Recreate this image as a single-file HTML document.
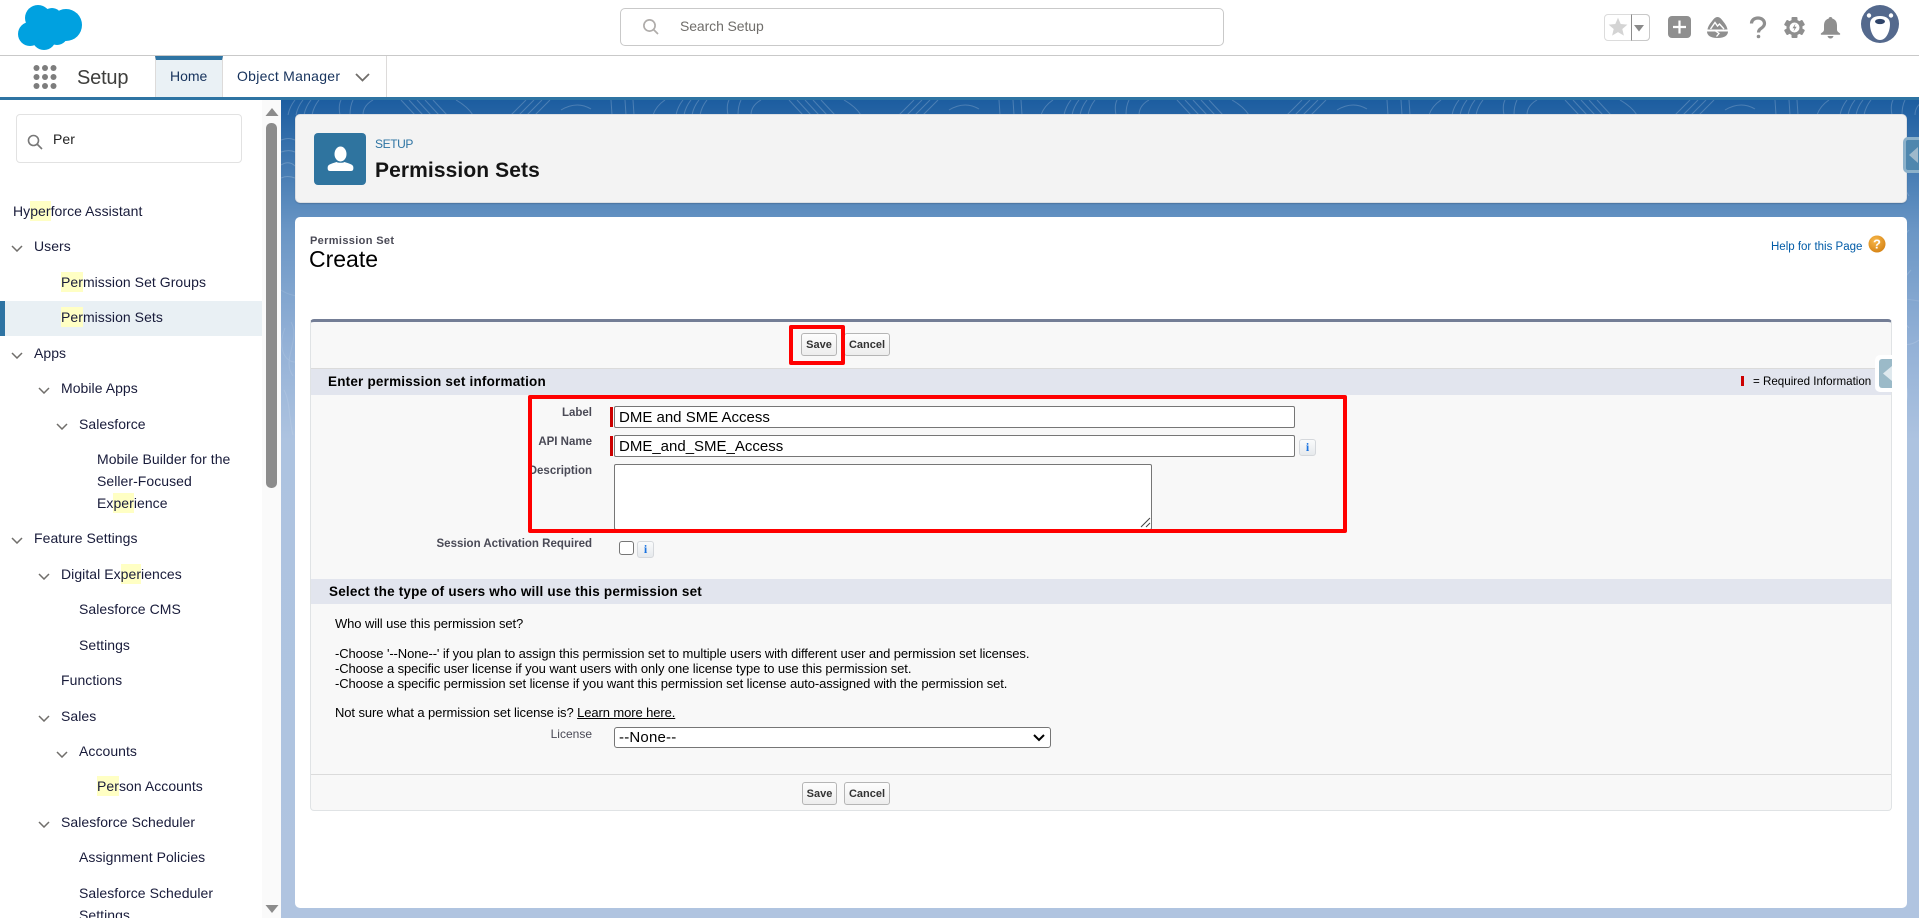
<!DOCTYPE html>
<html lang="en">
<head>
<meta charset="utf-8">
<title>Permission Sets</title>
<style>
html,body{margin:0;padding:0;width:1919px;height:918px;overflow:hidden;background:#fff}
body{position:relative;font-family:"Liberation Sans",Arial,sans-serif;color:#16325c}
div,span,svg{box-sizing:border-box}
.a{position:absolute}
.t{position:absolute;white-space:nowrap}
.r{position:absolute;white-space:nowrap;height:20px;line-height:20px;font-size:14px;letter-spacing:.05px;color:#181b3a;margin-top:-1px}
.h{display:inline-block;background:#ffffc4;height:20px;line-height:20px}
.c{position:absolute;width:12px;height:7px}
.lb{position:absolute;right:1327px;white-space:nowrap;font-size:11.5px;font-weight:bold;color:#4a4a56;height:14px;line-height:14px}
.tx{position:absolute;white-space:nowrap;font-size:13px;color:#000;height:15px;line-height:15px;letter-spacing:-.1px}
.sec{position:absolute;left:311px;width:1580px;background:#e2e5ee}
.sect{position:absolute;white-space:nowrap;font-size:13.5px;font-weight:bold;color:#000;line-height:16px;height:16px;letter-spacing:.2px}
.btn{position:absolute;border:1px solid #b5b5b5;border-radius:3px;background:linear-gradient(#fdfdfd,#ededed);font-size:11px;font-weight:bold;color:#333;text-align:center;line-height:22px;height:23px}
.inp{position:absolute;background:#fff;border:1px solid #767676;border-radius:2px;font-size:15px;color:#000;line-height:22px;padding-left:4px;white-space:nowrap}
.req{position:absolute;background:#c00;width:3px}
.info{position:absolute;border:1px solid #d5d8dc;border-radius:3px;background:linear-gradient(#fafbfc,#e6e9ec);color:#1a73e0;font:bold 12px "Liberation Serif",serif;text-align:center;line-height:15px}
.red{position:absolute;border:4px solid #f00;border-radius:2px;pointer-events:none}
</style>
</head>
<body>

<!-- content background -->
<div class="a" style="left:281px;top:100px;width:1638px;height:818px;background:linear-gradient(#1c5da0 0,#3f77b0 60px,#6a96c5 130px,#92b0d6 240px,#adc3e0 340px,#b0c4e0 818px)"></div>
<svg class="a" style="left:281px;top:100px" width="1638" height="340" fill="none" stroke="#fff" stroke-width="1">
  <defs>
    <pattern id="p" width="388" height="340" patternUnits="userSpaceOnUse">
      <g stroke-opacity=".2">
      <path d="M14 0C10 5 8 10 7 15M22 0C18 5 16 10 15 15M30 0C26 5 24 10 23 15M38 0C34 5 32 10 31 15M60 0C58 4 58 10 59 15M72 0C70 4 69 10 69 15M92 0C85 4 82 9 82 15M120 0L134 15M128 0L142 15M136 0L150 15M144 0L158 15M152 0L166 15M175 0C182 4 188 9 192 15M230 15L245 0M238 15L253 0M246 15L261 0M254 15L269 0M280 10C290 4 300 3 310 9M330 0L331 15M344 0L345 15M352 0L353 15M372 15C374 9 378 4 384 0"/>
      <path d="M0 40C6 38 9 38 14 40M0 52C6 50 10 50 14 52M0 65C5 62 10 62 14 66M0 78C4 76 9 76 14 78"/>
      </g>
      <g stroke-opacity=".1">
      <path d="M0 190C8 196 30 200 46 198C70 196 90 204 120 204M30 204C34 210 50 214 70 212M300 204C320 214 345 214 388 206M200 204C215 216 240 216 262 206"/>
      <path d="M4 228C-4 248 4 262 14 262M10 222C20 240 0 260 12 276M3 290C9 300 8 320 12 335"/>
      </g>
    </pattern>
  </defs>
  <rect width="1638" height="340" fill="url(#p)" stroke="none"/>
  <path stroke-opacity=".15" d="M1628 130C1610 150 1605 170 1618 190M1630 170C1612 190 1612 210 1628 228M1612 240C1622 246 1630 246 1638 240M1612 270C1624 276 1630 290 1624 306M1626 60C1620 70 1620 84 1628 96" />
</svg>

<!-- top bar -->
<div class="a" style="left:0;top:0;width:1919px;height:56px;background:#fff;border-bottom:1px solid #c9c9c9"></div>
<svg class="a" style="left:16px;top:3px" width="68" height="49" fill="#00a1e0">
  <circle cx="22" cy="15" r="13"/><circle cx="36" cy="15" r="10"/><circle cx="50" cy="22" r="16"/>
  <circle cx="14" cy="31" r="12"/><circle cx="28" cy="35" r="12"/><circle cx="41" cy="31" r="11"/><circle cx="28" cy="24" r="14"/>
</svg>
<div class="a" style="left:620px;top:8px;width:604px;height:38px;border:1px solid #c9c9c9;border-radius:5px;background:#fff"></div>
<svg class="a" style="left:642px;top:18px" width="17" height="17" fill="none" stroke="#b0adab" stroke-width="1.7"><circle cx="7.5" cy="7.5" r="5.6"/><path d="M11.5 11.5L16 16"/></svg>
<div class="t" style="left:680px;top:16px;height:20px;line-height:20px;font-size:14px;color:#706e6b;letter-spacing:-.1px">Search Setup</div>

<!-- top right icons -->
<div class="a" style="left:1604px;top:14px;width:46px;height:27px;border:1px solid #dcdcdc;border-radius:4px;background:#fff"></div>
<div class="a" style="left:1631px;top:14px;width:19px;height:27px;border:1px solid #c9c9c9;border-left:1px solid #8c8c8c;border-radius:0 4px 4px 0"></div>
<svg class="a" style="left:1608px;top:17px" width="20" height="20" fill="#d4d4d4"><path d="M10 .8l2.7 6.2 6.7.6-5.1 4.4 1.6 6.6-5.9-3.5-5.9 3.5 1.6-6.6L.6 7.6l6.7-.6z"/></svg>
<svg class="a" style="left:1633px;top:25px" width="12" height="7" fill="#8a8a8a"><path d="M1 0h10L6 6.5z"/></svg>
<div class="a" style="left:1668px;top:16px;width:23px;height:22px;background:#8f8f8f;border-radius:4px"></div>
<svg class="a" style="left:1668px;top:16px" width="23" height="22" stroke="#fff" stroke-width="2.2"><path d="M11.5 4.500v13M5 11h13"/></svg>
<svg class="a" style="left:1706px;top:17px" width="23" height="21" fill="#8f8f8f">
  <path d="M11.5 0C13.500 0 15 1.500 16.500 3.500C18.500 6 21 9 21.500 12.500H1.500C2 9 4.500 6 6.500 3.500C8 1.500 9.500 0 11.500 0z"/>
  <path d="M1 14.500h21C22 18 19 21 11.500 21S1 18 1 14.500z"/>
  <path d="M4.500 12L9 5.500l2.500 3.500 2-2L18 12" fill="none" stroke="#fff" stroke-width="1.400"/>
  <path d="M9.500 14l3.500 2.500-2.500 3" fill="none" stroke="#fff" stroke-width="1.300"/>
</svg>
<svg class="a" style="left:1748px;top:16px" width="20" height="23" fill="none" stroke="#8f8f8f" stroke-width="3.2"><path d="M3.500 7.500C3.500 4 6.500 2 10 2s6.500 2.200 6.500 5.500c0 2.300-1.400 3.400-3 4.600-1.900 1.300-3 2.200-3 4.400"/><circle cx="10.500" cy="20.500" r="1.300" fill="#8f8f8f" stroke-width="1"/></svg>
<svg class="a" style="left:1784px;top:17px" width="21" height="21">
  <g fill="#8f8f8f">
    <rect x="7.500" y="0" width="6" height="21" rx="1"/>
    <rect x="7.500" y="0" width="6" height="21" rx="1" transform="rotate(60 10.500 10.500)"/>
    <rect x="7.500" y="0" width="6" height="21" rx="1" transform="rotate(120 10.500 10.500)"/>
    <circle cx="10.500" cy="10.500" r="8"/>
  </g>
  <circle cx="10.500" cy="10.500" r="5" fill="#fff"/>
  <path fill="#8f8f8f" d="M11.500 6.500l-3 4.700h2l-1 3.300 3.200-4.800h-2.100z"/>
</svg>
<svg class="a" style="left:1819px;top:16px" width="23" height="23" fill="#8f8f8f"><path d="M11.500 1c1 0 1.700.6 1.900 1.600C16.600 3.500 18 6 18 9.500v4c0 1.800 1.100 2.600 2.800 3.700.8.500.5 1.500-.4 1.500H2.600c-.9 0-1.200-1-.4-1.500C3.900 16.100 5 15.300 5 13.500v-4c0-3.500 1.400-6 4.600-6.900C9.800 1.600 10.500 1 11.500 1z"/><path d="M8.500 20h6c-.3 1.500-1.600 2.500-3 2.500s-2.700-1-3-2.500z"/></svg>
<svg class="a" style="left:1861px;top:5px" width="38" height="38">
  <circle cx="19" cy="19" r="19" fill="#54698d"/>
  <circle cx="8" cy="10.500" r="2.200" fill="#fff"/><circle cx="30" cy="10.500" r="2.200" fill="#fff"/>
  <path fill="#fff" d="M19 11c6 0 10 2.500 10 8 0 7-3.500 16-10 16S9 26 9 19c0-5.500 4-8 10-8z"/>
  <ellipse cx="19" cy="16.500" rx="5" ry="2.600" fill="#2f4469"/>
</svg>

<!-- nav bar -->
<div class="a" style="left:0;top:97px;width:1919px;height:3px;background:#2e74a3"></div>
<svg class="a" style="left:33px;top:65px" width="24" height="24" fill="#7d7d7d">
  <circle cx="3.500" cy="3" r="3"/><circle cx="12" cy="3" r="3"/><circle cx="20.500" cy="3" r="3"/>
  <circle cx="3.500" cy="12" r="3"/><circle cx="12" cy="12" r="3"/><circle cx="20.500" cy="12" r="3"/>
  <circle cx="3.500" cy="21" r="3"/><circle cx="12" cy="21" r="3"/><circle cx="20.500" cy="21" r="3"/>
</svg>
<div class="t" style="left:77px;top:65px;height:26px;line-height:26px;font-size:20px;color:#3e3e3c;letter-spacing:-.2px">Setup</div>
<div class="a" style="left:155px;top:56px;width:68px;height:41px;background:#eaf1f5;border-top:4px solid #2e74a3;border-right:1px solid #dddbda;border-left:1px solid #dddbda"></div>
<div class="t" style="left:170px;top:66px;height:20px;line-height:20px;font-size:14px;color:#16325c">Home</div>
<div class="t" style="left:237px;top:66px;height:20px;line-height:20px;font-size:14px;color:#16325c;letter-spacing:.26px">Object Manager</div>
<svg class="a" style="left:355px;top:73px" width="15" height="9" fill="none" stroke="#706e6b" stroke-width="1.800"><path d="M1 1l6.500 6.500L14 1"/></svg>
<div class="a" style="left:386px;top:56px;width:1px;height:41px;background:#dddbda"></div>

<!-- sidebar -->
<div class="a" style="left:0;top:100px;width:281px;height:818px;background:#fafafa"></div>
<div class="a" style="left:0;top:100px;width:262px;height:818px;background:#fff"></div>
<div class="a" style="left:16px;top:114px;width:226px;height:49px;border:1px solid #e2e2e2;border-radius:4px;background:#fff"></div>
<svg class="a" style="left:27px;top:134px" width="16" height="16" fill="none" stroke="#777" stroke-width="1.600"><circle cx="6.500" cy="6.500" r="5"/><path d="M10 10l5 5"/></svg>
<div class="r" style="left:53px;top:130px;color:#222">Per</div>
<div class="a" style="left:0;top:301px;width:262px;height:35px;background:#e9f0f4;border-left:5px solid #2e74a3"></div>

<div class="r" style="left:13px;top:202px">Hy<span class="h">per</span>force Assistant</div>
<div class="r" style="left:34px;top:237px">Users</div>
<div class="r" style="left:61px;top:273px"><span class="h">Per</span>mission Set Groups</div>
<div class="r" style="left:61px;top:308px"><span class="h">Per</span>mission Sets</div>
<div class="r" style="left:34px;top:344px">Apps</div>
<div class="r" style="left:61px;top:379px">Mobile Apps</div>
<div class="r" style="left:79px;top:415px">Salesforce</div>
<div class="r" style="left:97px;top:450px">Mobile Builder for the</div>
<div class="r" style="left:97px;top:472px">Seller-Focused</div>
<div class="r" style="left:97px;top:494px">Ex<span class="h">per</span>ience</div>
<div class="r" style="left:34px;top:529px">Feature Settings</div>
<div class="r" style="left:61px;top:565px">Digital Ex<span class="h">per</span>iences</div>
<div class="r" style="left:79px;top:600px">Salesforce CMS</div>
<div class="r" style="left:79px;top:636px">Settings</div>
<div class="r" style="left:61px;top:671px">Functions</div>
<div class="r" style="left:61px;top:707px">Sales</div>
<div class="r" style="left:79px;top:742px">Accounts</div>
<div class="r" style="left:97px;top:777px"><span class="h">Per</span>son Accounts</div>
<div class="r" style="left:61px;top:813px">Salesforce Scheduler</div>
<div class="r" style="left:79px;top:848px">Assignment Policies</div>
<div class="r" style="left:79px;top:884px">Salesforce Scheduler</div>
<div class="r" style="left:79px;top:906px;height:13px;overflow:hidden">Settings</div>

<svg width="0" height="0" style="position:absolute"><defs><path id="ch" d="M1 1l5 5 5-5" fill="none" stroke="#706e6b" stroke-width="1.500"/></defs></svg>
<svg class="c" style="left:11px;top:245px"><use href="#ch"/></svg>
<svg class="c" style="left:11px;top:352px"><use href="#ch"/></svg>
<svg class="c" style="left:38px;top:387px"><use href="#ch"/></svg>
<svg class="c" style="left:56px;top:423px"><use href="#ch"/></svg>
<svg class="c" style="left:11px;top:537px"><use href="#ch"/></svg>
<svg class="c" style="left:38px;top:573px"><use href="#ch"/></svg>
<svg class="c" style="left:38px;top:715px"><use href="#ch"/></svg>
<svg class="c" style="left:56px;top:751px"><use href="#ch"/></svg>
<svg class="c" style="left:38px;top:821px"><use href="#ch"/></svg>

<svg class="a" style="left:265px;top:108px" width="14" height="8" fill="#8c8c8c"><path d="M7 0l6.500 8H.5z"/></svg>
<div class="a" style="left:266px;top:123px;width:11px;height:365px;background:#8c8c8c;border-radius:5px"></div>
<svg class="a" style="left:265px;top:905px" width="14" height="8" fill="#8c8c8c"><path d="M7 8L.5 0h13z"/></svg>

<!-- page header card -->
<div class="a" style="left:295px;top:114px;width:1612px;height:89px;background:#f3f3f3;border-radius:5px;border:1px solid #dcdfe3;box-shadow:0 1px 1px rgba(0,0,0,.15)"></div>
<div class="a" style="left:314px;top:133px;width:52px;height:52px;background:#2f749f;border-radius:4px"></div>
<svg class="a" style="left:327px;top:146px" width="27" height="26" fill="#fff">
  <ellipse cx="13.500" cy="8" rx="6" ry="7.500"/>
  <path d="M1 24c-.5-1-.5-3 0-4 1-2 6-3 8.500-4 1.500 1 6.500 1 8 0 2.500 1 7.500 2 8.500 4 .5 1 .5 3 0 4-.3.500-1 1-2 1H3c-1 0-1.700-.5-2-1z"/>
</svg>
<div class="t" style="left:375px;top:135px;height:18px;line-height:18px;font-size:12px;letter-spacing:-.4px;color:#2e74a3">SETUP</div>
<div class="t" style="left:375px;top:158px;height:26px;line-height:26px;font-size:21px;font-weight:bold;color:#141414;letter-spacing:.1px">Permission Sets</div>
<div class="a" style="left:1903px;top:137px;width:16px;height:36px;border:3px solid rgba(255,255,255,.35);border-right:0;border-radius:5px 0 0 5px;background:#4f87ae"></div>
<svg class="a" style="left:1909px;top:147px" width="10" height="16" fill="#9fb9cb"><path d="M9 0v16L0 8z"/></svg>

<!-- main card -->
<div class="a" style="left:295px;top:217px;width:1612px;height:691px;background:#fff;border-radius:5px"></div>
<div class="t" style="left:310px;top:234px;height:14px;line-height:14px;font-size:11px;font-weight:bold;color:#4a4a56;letter-spacing:.35px">Permission Set</div>
<div class="t" style="left:309px;top:245px;height:28px;line-height:28px;font-size:23px;color:#000">Create</div>
<div class="t" style="left:1771px;top:240px;height:15px;line-height:15px;font-size:11.5px;color:#015ba7">Help for this Page</div>
<svg class="a" style="left:1868px;top:235px" width="18" height="18"><defs><radialGradient id="og" cx=".4" cy=".3" r=".8"><stop offset="0" stop-color="#f8b84a"/><stop offset="1" stop-color="#d27e10"/></radialGradient></defs><circle cx="9" cy="9" r="8.500" fill="url(#og)"/><text x="9" y="13.500" text-anchor="middle" font-family="Liberation Sans" font-size="13" font-weight="bold" fill="#fff">?</text></svg>

<!-- form block -->
<div class="a" style="left:310px;top:319px;width:1582px;height:492px;background:#f8f8f8;border:1px solid #e0e3e5;border-top:3px solid #747e96;border-radius:4px"></div>
<div class="btn" style="left:801px;top:333px;width:36px">Save</div>
<div class="btn" style="left:844px;top:333px;width:46px">Cancel</div>
<div class="a" style="left:311px;top:368px;width:1580px;height:1px;background:#dbdbdb"></div>
<div class="sec" style="top:369px;height:26px"></div>
<div class="sect" style="left:328px;top:374px">Enter permission set information</div>
<div class="req" style="left:1741px;top:376px;height:10px"></div>
<div class="t" style="left:1753px;top:374px;height:15px;line-height:15px;font-size:11.6px;color:#000">= Required Information</div>
<div class="a" style="left:1875px;top:355px;width:17px;height:37px;background:#fff;border-radius:5px 0 0 5px"></div>
<div class="a" style="left:1879px;top:359px;width:13px;height:29px;background:#9bbac8;border-radius:3px 0 0 3px"></div>
<svg class="a" style="left:1883px;top:366px" width="9" height="15" fill="#dfe9ee"><path d="M9 0v15L0 7.500z"/></svg>

<div class="lb" style="top:406px">Label</div>
<div class="lb" style="top:435px">API Name</div>
<div class="lb" style="top:464px">Description</div>
<div class="lb" style="top:537px">Session Activation Required</div>

<div class="req" style="left:610px;top:407px;height:20px"></div>
<div class="inp" style="left:614px;top:406px;width:681px;height:22px">DME and SME Access</div>
<div class="req" style="left:610px;top:436px;height:20px"></div>
<div class="inp" style="left:614px;top:435px;width:681px;height:22px">DME_and_SME_Access</div>
<div class="info" style="left:1299px;top:439px;width:17px;height:17px">i</div>
<div class="inp" style="left:614px;top:464px;width:538px;height:66px"></div>
<svg class="a" style="left:1140px;top:517px" width="11" height="11" stroke="#444" stroke-width="1"><path d="M1 10L10 1M6 10l4-4"/></svg>
<div class="a" style="left:619px;top:541px;width:15px;height:14px;border:1px solid #767676;border-radius:3px;background:#fff"></div>
<div class="info" style="left:637px;top:541px;width:17px;height:17px">i</div>

<div class="sec" style="top:579px;height:25px"></div>
<div class="sect" style="left:329px;top:584px">Select the type of users who will use this permission set</div>

<div class="tx" style="left:335px;top:616px">Who will use this permission set?</div>
<div class="tx" style="left:335px;top:646px">-Choose '--None--' if you plan to assign this permission set to multiple users with different user and permission set licenses.</div>
<div class="tx" style="left:335px;top:661px">-Choose a specific user license if you want users with only one license type to use this permission set.</div>
<div class="tx" style="left:335px;top:676px">-Choose a specific permission set license if you want this permission set license auto-assigned with the permission set.</div>
<div class="tx" style="left:335px;top:705px">Not sure what a permission set license is? <span style="text-decoration:underline">Learn more here.</span></div>

<div class="lb" style="top:727px;font-weight:normal;color:#4a4a56;font-size:12px">License</div>
<div class="inp" style="left:614px;top:727px;width:437px;height:21px;padding-left:4px;line-height:20px;border-radius:3px;letter-spacing:.2px">--None--</div>
<svg class="a" style="left:1033px;top:734px" width="12" height="8" fill="none" stroke="#000" stroke-width="2"><path d="M1 1l5 5 5-5"/></svg>

<div class="a" style="left:311px;top:774px;width:1580px;height:1px;background:#dbdbdb"></div>
<div class="btn" style="left:802px;top:782px;width:35px">Save</div>
<div class="btn" style="left:844px;top:782px;width:46px">Cancel</div>

<!-- red annotation boxes -->
<div class="red" style="left:789px;top:325px;width:56px;height:40px"></div>
<div class="red" style="left:528px;top:395px;width:819px;height:138px"></div>

</body>
</html>
